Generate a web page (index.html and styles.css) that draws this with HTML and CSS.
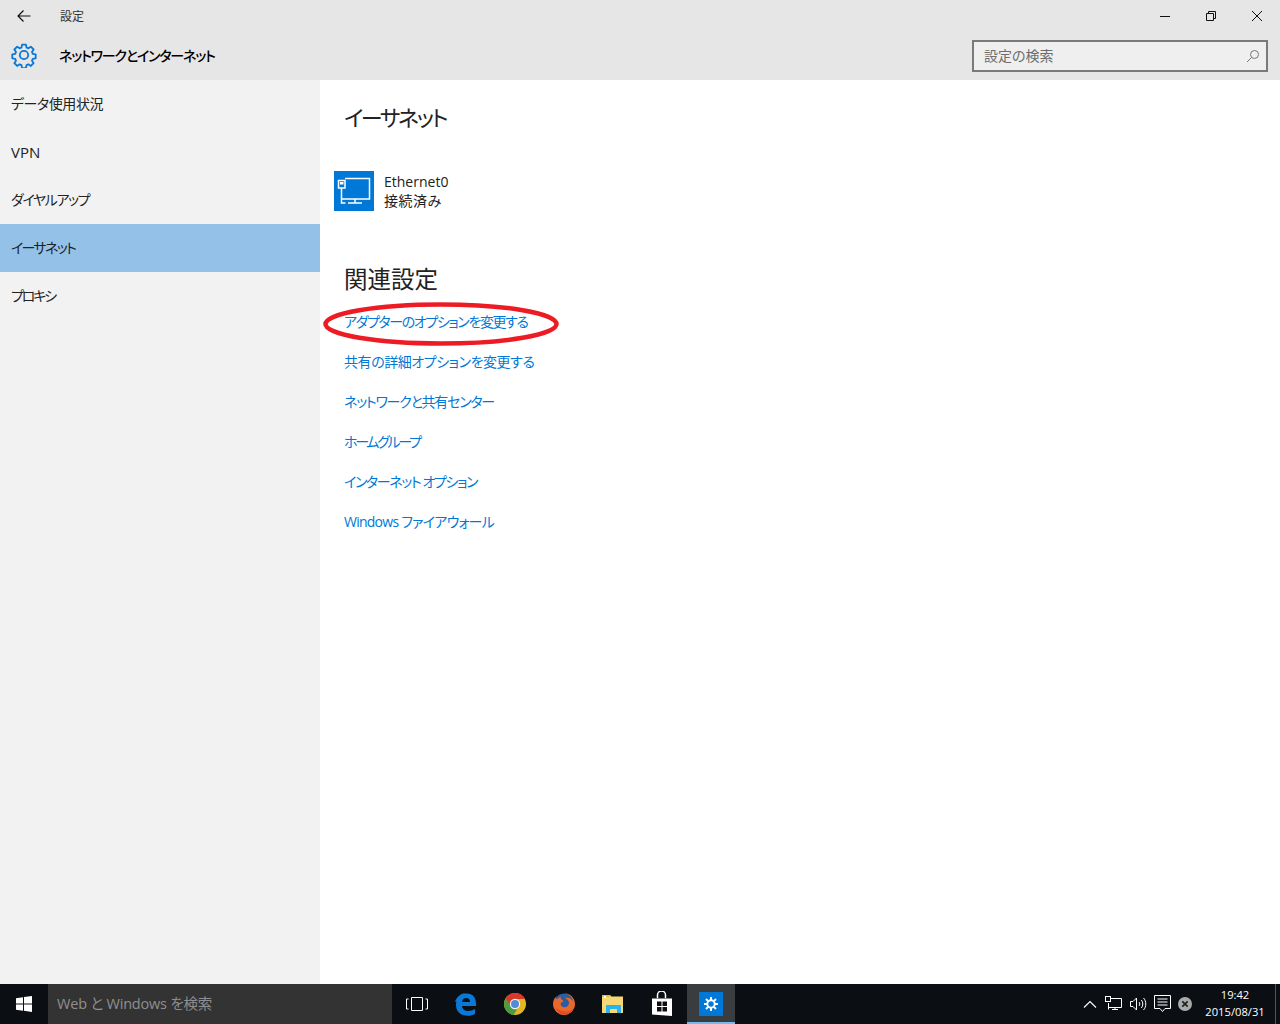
FILE: index.html
```html
<!DOCTYPE html>
<html lang="ja">
<head>
<meta charset="utf-8">
<title>設定</title>
<link rel="stylesheet" href="styles.css">
</head>
<body>
<div class="window">
  <header class="titlebar">
    <div class="caption">
      <svg class="back" width="16" height="16" viewBox="0 0 16 16"><path d="M14.500 8H2M7.500 2.500 2 8l5.500 5.500" fill="none" stroke="#111" stroke-width="1.200"/></svg>
      <span class="app-name">設定</span>
      <div class="win-controls">
        <svg width="12" height="12" viewBox="0 0 12 12"><path d="M1 6.500h10" stroke="#111" fill="none"/></svg>
        <svg width="12" height="12" viewBox="0 0 12 12"><path d="M1.500 3.500h7v7h-7zM3.500 3.500v-2h7v7h-2" stroke="#111" fill="none"/></svg>
        <svg width="12" height="12" viewBox="0 0 12 12"><path d="M1 1l10 10M11 1 1 11" stroke="#111" fill="none"/></svg>
      </div>
    </div>
    <div class="heading-row">
      <svg class="gear" width="26" height="26" viewBox="0 0 26 26"><path d="M10.800 1.500h4.400l.6 3.200 2 .9 2.800-1.800 3.100 3.100-1.800 2.800.9 2 3.200.6v4.400l-3.200.6-.9 2 1.800 2.800-3.100 3.100-2.800-1.800-2 .9-.6 3.200h-4.400l-.6-3.200-2-.9-2.800 1.800-3.100-3.100 1.800-2.800-.9-2-3.200-.6v-4.400l3.200-.6.9-2-1.800-2.800 3.100-3.100 2.800 1.800 2-.9z" transform="translate(1.300 1.300) scale(.9)" fill="none" stroke="#0a78d7" stroke-width="2" stroke-linejoin="round"/><circle cx="13" cy="13" r="4.200" fill="none" stroke="#0a78d7" stroke-width="1.800"/></svg>
      <h1 class="section-title">ネットワークとインターネット</h1>
      <div class="search-box">
        <span class="search-text">設定の検索</span>
        <svg width="14" height="14" viewBox="0 0 14 14"><circle cx="8.500" cy="5.500" r="4" fill="none" stroke="#777"/><path d="M5.500 8.500 1 13" stroke="#777" fill="none"/></svg>
      </div>
    </div>
  </header>
  <div class="body-row">
    <nav class="sidebar">
      <a class="nav-item fit-a">データ使用状況</a>
      <a class="nav-item nav-latin">VPN</a>
      <a class="nav-item fit-c">ダイヤルアップ</a>
      <a class="nav-item active fit-d">イーサネット</a>
      <a class="nav-item fit-e">プロキシ</a>
    </nav>
    <main class="content">
      <h2 class="page-title">イーサネット</h2>
      <div class="connection">
        <div class="conn-icon">
          <svg width="40" height="40" viewBox="0 0 40 40"><g fill="none" stroke="#fff" stroke-width="1.500"><path d="M11 7.500h24.500v20.500H8"/><path d="M4.500 9.500h6.500v7.500H4.500z"/><path d="M7.500 17v15h4M21 28v4M14 32h14"/></g><rect x="6" y="11" width="3.500" height="2.500" fill="#fff"/></svg>
        </div>
        <div class="conn-text">
          <div>Ethernet0</div>
          <div class="conn-status">接続済み</div>
        </div>
      </div>
      <h2 class="related-title">関連設定</h2>
      <div class="links">
        <a class="link fit-c">アダプターのオプションを変更する</a>
        <a class="link fit-a">共有の詳細オプションを変更する</a>
        <a class="link fit-f">ネットワークと共有センター</a>
        <a class="link fit-g">ホームグループ</a>
        <a class="link fit-c">インターネット オプション</a>
        <a class="link fit-h">Windows ファイアウォール</a>
      </div>
      <svg class="annotation" width="240" height="48" viewBox="0 0 240 48"><ellipse cx="120" cy="24" rx="115.500" ry="19.500" fill="none" stroke="#ed1c24" stroke-width="4.500"/></svg>
    </main>
  </div>
  <footer class="taskbar">
    <div class="start">
      <svg width="18" height="18" viewBox="0 0 18 18"><path d="M1 3.200 8 2.200v6.300H1zM9 2 17 1v7.500H9zM1 9.500h7v6.300l-7-1zM9 9.500h8V17l-8-1.200z" fill="#fff"/></svg>
    </div>
    <div class="task-search">Web と Windows を検索</div>
    <div class="task-icons">
      <div class="task-btn">
        <svg width="22" height="14" viewBox="0 0 22 14"><path d="M5.500.5h11v13h-11zM2.500 2H.5v10h2M19.500 2h2v10h-2" fill="none" stroke="#fff"/></svg>
      </div>
      <div class="task-btn">
        <svg width="22" height="24" viewBox="0 0 22 24"><path d="M1 13C1 6 5.500 1.500 12 1.500c5.500 0 9 3.500 9 10.500v2H7c.3 3.500 3 5 6 5 2.800 0 5-.7 7-2v5c-2 1.200-4.500 1.800-7.500 1.800C5.500 23.800 1 19.500 1 13zm6-3h8c0-2.500-1.500-4-3.800-4S7.500 7.500 7 10z" fill="#0a78d7"/><path d="M0 10C1.500 5 6 1 11 1 7 2.500 4 5 2.500 9z" fill="#0a78d7"/></svg>
      </div>
      <div class="task-btn">
        <svg width="24" height="24" viewBox="0 0 24 24"><circle cx="12" cy="12" r="11" fill="#e2b71f"/><path d="M12 1a11 11 0 0 0-9.500 5.500L8 15l4-8h10A11 11 0 0 0 12 1z" fill="#d63a2c"/><path d="M2.500 6.500a11 11 0 0 0 8 16.400L15.500 15 8 14z" fill="#4a9c44"/><circle cx="12" cy="12" r="5.200" fill="#f4f4f4"/><circle cx="12" cy="12" r="4" fill="#5489d6"/></svg>
      </div>
      <div class="task-btn">
        <svg width="24" height="24" viewBox="0 0 24 24"><circle cx="12" cy="12" r="10.500" fill="#2c5d9e"/><path d="M12 1c6 0 11 5 11 11s-5 11-11 11S1 18 1 12c0-3 1-5 2.500-7l1 2.500C6 6 7.500 5 9 4.500 8 6.500 9 7 10.500 8 12 9 11 10 9.500 10.500 8 11 8.500 14 11 15c3 1 6-1 6-4 0-2-1.500-4-4-5 3-1 6 0 8 3C20 5 17 2 12 1z" fill="#e8682a"/><path d="M3 15c2 5 6 7.500 9 7.500 5 0 9-3 10-8-1 3-5 6-9 5-4-.5-8-2-10-4.500z" fill="#e44a20"/></svg>
      </div>
      <div class="task-btn">
        <svg width="24" height="20" viewBox="0 0 24 20"><path d="M1 1h8l1.500 1.500H22V19H1z" fill="#f7d774"/><path d="M1 1h8v2H1z" fill="#e2b94f"/><path d="M5 19v-8h15v8h-4v-4H9v4z" fill="#2ab4ec"/><rect x="3" y="2" width="2" height="2" fill="#fff"/></svg>
      </div>
      <div class="task-btn">
        <svg width="22" height="26" viewBox="0 0 22 26"><path d="M6.500 7V4a4 4 0 0 1 8 0v3" fill="none" stroke="#fff" stroke-width="1.500"/><path d="M1 7.500h20V25L1 23.500z" fill="#fff"/><path d="M6 10.500h4.500V15H6zM11.500 10.500H16V15h-4.500zM6 16h4.500v4.500H6zM11.500 16H16v4.500h-4.500z" fill="#0b0f14"/></svg>
      </div>
      <div class="task-btn current">
        <div class="settings-tile">
          <svg width="14" height="14" viewBox="0 0 14 14"><circle cx="7" cy="7" r="3.700" fill="none" stroke="#fff" stroke-width="2"/><path d="M7 0v3M7 11v3M0 7h3M11 7h3M2 2l2.100 2.100M9.900 9.900 12 12M12 2 9.900 4.100M4.100 9.900 2 12" stroke="#fff" stroke-width="2"/></svg>
        </div>
      </div>
    </div>
    <div class="tray">
      <svg class="tray-chevron" width="14" height="8" viewBox="0 0 14 8"><path d="M1 7.500 7 1.500l6 6" fill="none" stroke="#fff" stroke-width="1.100"/></svg>
      <svg width="18" height="16" viewBox="0 0 18 16"><path d="M3.500 2.500h13v9h-13M3.500 7v6.500M7 13.500h6M10 11.500v2" fill="none" stroke="#fff"/><rect x=".5" y=".5" width="5" height="5" fill="#0b0f14" stroke="#fff"/></svg>
      <svg width="17" height="14" viewBox="0 0 17 14"><path d="M.5 4.500h2.500L6.500 1v12L3 9.500H.5zM9 5c1 1 1 3 0 4M11.300 3c2 2 2 6 0 8M13.500 1c3 3 3 9 0 12" fill="none" stroke="#fff"/></svg>
      <svg width="17" height="18" viewBox="0 0 17 18"><path d="M.5.500h16v13H11l-2.500 3-2.500-3H.5zM3.500 4h10M3.500 7h10M3.500 10h10" fill="none" stroke="#fff"/></svg>
      <svg width="14" height="14" viewBox="0 0 14 14"><circle cx="7" cy="7" r="7" fill="#aaa"/><path d="M4.300 4.300l5.400 5.400M9.700 4.300 4.300 9.700" stroke="#222" stroke-width="1.800"/></svg>
      <div class="clock"><div>19:42</div><div>2015/08/31</div></div>
    </div>
    <div class="show-desktop"></div>
  </footer>
</div>
</body>
</html>
```

FILE: styles.css
```css
* { box-sizing: border-box; }
html, body { margin: 0; padding: 0; height: 100%; }
body { font-family: "Open Sans", "Noto Sans CJK JP", sans-serif; font-size: 14px; color: #222; background: #fff; overflow: hidden; font-feature-settings: "palt"; }
.window { width: 1280px; height: 1024px; display: flex; flex-direction: column; }
.titlebar { height: 80px; background: #e6e6e6; flex: none; display: flex; flex-direction: column; }
.caption { height: 31px; display: flex; align-items: center; padding-left: 16px; }
.back { flex: none; }
.app-name { margin-left: 28px; font-size: 12px; color: #333; }
.win-controls { margin-left: auto; display: flex; gap: 34px; padding-right: 17px; }
.heading-row { height: 49px; display: flex; align-items: center; padding: 0 12px 0 11px; }
.gear { flex: none; margin-top: -2px; }
.section-title { margin: -2px 0 0 22px; font-size: 14px; font-weight: 500; color: #000; letter-spacing: -1.200px; }
.search-box { margin-left: auto; width: 296px; height: 32px; border: 2px solid #7a7a7a; background: #efefef; display: flex; align-items: center; justify-content: space-between; padding: 0 6px 0 10px; }
.search-text { font-size: 14px; color: #6d6d6d; margin-top: -1px; }
.body-row { flex: 1; display: flex; min-height: 0; }
.sidebar { width: 320px; flex: none; background: #f2f2f2; display: flex; flex-direction: column; }
.nav-item { height: 48px; line-height: 47px; padding-left: 11px; font-size: 14px; color: #222; }
.nav-item.active { background: #93c1e8; }
.nav-latin { font-size: 15px; line-height: 49px; }
.fit-a { letter-spacing: -.45px; }
.fit-c { letter-spacing: -1.400px; }
.fit-d { letter-spacing: -1.700px; }
.fit-e { letter-spacing: -2.200px; }
.fit-f { letter-spacing: -1.250px; }
.fit-g { letter-spacing: -2.300px; }
.fit-h { letter-spacing: -.75px; }
.content { flex: 1; position: relative; padding-left: 14px; }
.page-title { margin: 21px 0 0 10px; height: 33px; font-size: 22px; line-height: 33px; font-weight: 400; color: #222; letter-spacing: -2.450px; }
.connection { display: flex; height: 40px; margin-top: 37px; gap: 10px; }
.conn-icon { width: 40px; height: 40px; background: #0078d7; flex: none; }
.conn-icon svg { display: block; }
.conn-text { font-size: 14px; line-height: 20px; color: #222; padding-top: 1px; }
.conn-status { margin-top: -1px; letter-spacing: .5px; }
.related-title { margin: 52px 0 0 10px; height: 33px; font-size: 23.500px; line-height: 33px; font-weight: 400; color: #222; }
.links { display: flex; flex-direction: column; margin: 16px 0 0 10px; }
.link { height: 40px; line-height: 20px; font-size: 14px; color: #0078d7; }
.annotation { position: absolute; left: 1px; top: 220px; }
.taskbar { height: 40px; flex: none; background: #0b0f14; display: flex; align-items: center; color: #fff; }
.start { width: 48px; height: 40px; display: flex; align-items: center; justify-content: center; flex: none; }
.task-search { width: 344px; height: 40px; background: #333; color: #8f8f8f; font-size: 14.500px; line-height: 40px; padding-left: 9px; flex: none; letter-spacing: -.2px; }
.task-icons { display: flex; margin-left: 0; }
.task-btn { width: 49px; height: 40px; display: flex; align-items: center; justify-content: center; flex: none; }
.task-btn.current { background: #3a3d40; border-bottom: 2px solid #76b9ed; width: 48px; margin-left: 1px; padding-top: 2px; }
.settings-tile { width: 24px; height: 24px; background: #0078d7; display: flex; align-items: center; justify-content: center; }
.tray { margin-left: auto; display: flex; align-items: center; gap: 7px; padding-right: 0; }
.tray-chevron { margin-right: 1px; }
.clock { font-size: 11.200px; line-height: 17px; text-align: center; width: 64px; margin-left: 4px; margin-top: -3px; margin-right: 8px; font-family: "Open Sans", sans-serif; }
.show-desktop { width: 1px; height: 40px; background: #555; margin-right: 4px; flex: none; }
```
